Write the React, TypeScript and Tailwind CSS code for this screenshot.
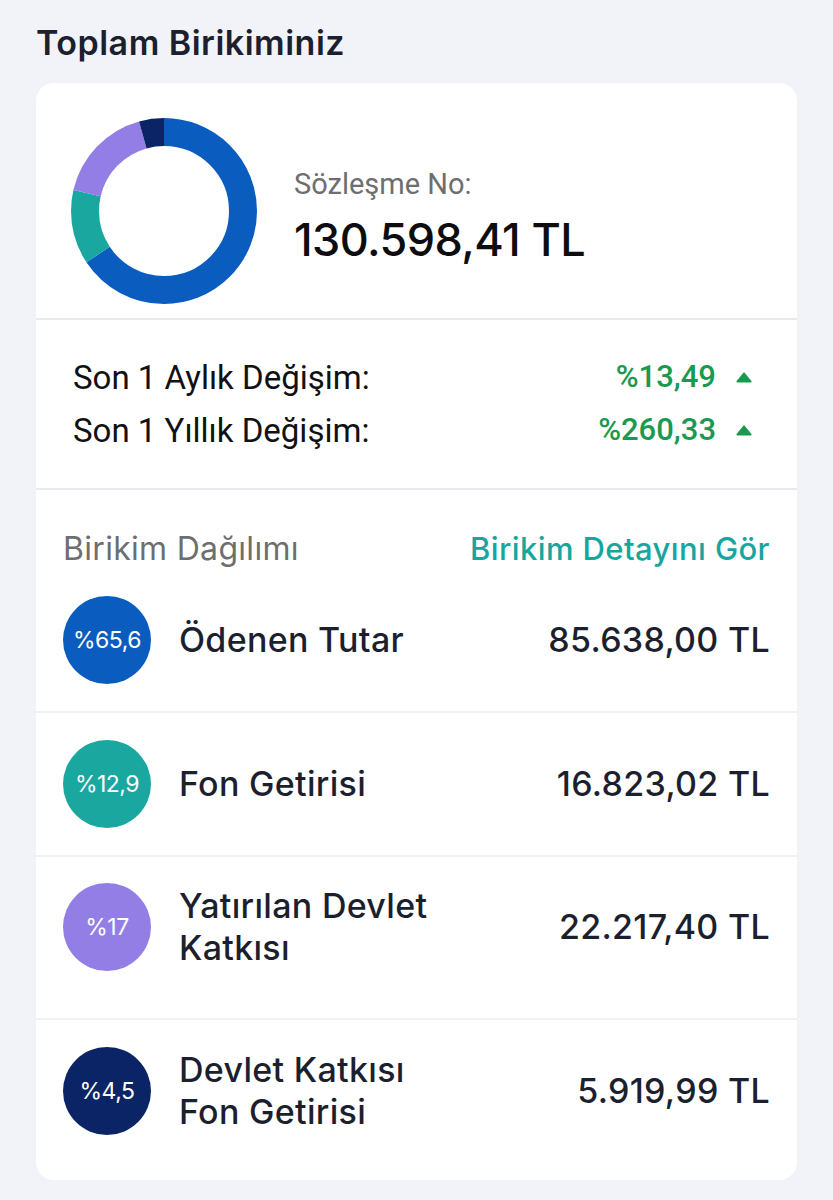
import React from "react";

type Part = { label: string[]; pct: string; value: string; color: string; share: number; pad: string };

const PARTS: Part[] = [
  { label: ["Ödenen Tutar"], pct: "%65,6", value: "85.638,00 TL", color: "#0a5dbf", share: 65.6, pad: "pt-[28px] pb-[27px]" },
  { label: ["Fon Getirisi"], pct: "%12,9", value: "16.823,02 TL", color: "#19a7a0", share: 12.9, pad: "pt-[27px] pb-[27px]" },
  { label: ["Yatırılan Devlet", "Katkısı"], pct: "%17", value: "22.217,40 TL", color: "#937ee6", share: 17, pad: "pt-[26px] pb-[47px]" },
  { label: ["Devlet Katkısı", "Fon Getirisi"], pct: "%4,5", value: "5.919,99 TL", color: "#0b2466", share: 4.5, pad: "pt-[27px] pb-[45px]" },
];

const sans = "font-['Inter','Roboto',sans-serif]";
const narrow = "font-['Roboto','Inter',sans-serif]";

function Donut() {
  const r = 79;
  const c = 2 * Math.PI * r;
  let offset = 0;
  return (
    <svg width="186" height="186" viewBox="0 0 186 186" className="shrink-0">
      <g transform="rotate(-90 93 93)">
        {PARTS.map((p) => {
          const len = (p.share / 100) * c;
          const el = (
            <circle
              key={p.pct}
              cx="93"
              cy="93"
              r={r}
              fill="none"
              stroke={p.color}
              strokeWidth="28"
              strokeDasharray={`${len} ${c - len}`}
              strokeDashoffset={-offset}
            />
          );
          offset += len;
          return el;
        })}
      </g>
    </svg>
  );
}

function UpArrow() {
  return (
    <svg width="16" height="11" viewBox="0 0 16 11" className="ml-[20px]">
      <path d="M8 1.2 L14.8 9.6 H1.2 Z" fill="#1a9a4f" stroke="#1a9a4f" strokeWidth="1.6" strokeLinejoin="round" />
    </svg>
  );
}

export default function App() {
  return (
    <div className={`min-h-[1200px] w-[833px] bg-[#f2f3f9] px-[36px] pt-[23px] ${sans}`}>
      <h1 className="text-[34px] leading-[40px] font-semibold text-[#1c1f2e] tracking-[0.5px]">Toplam Birikiminiz</h1>

      <div className="mt-[20px] bg-white rounded-[18px] overflow-hidden">
        {/* toplam + donut */}
        <div className="flex items-center pl-[35px] pt-[35px] pb-[14px]">
          <Donut />
          <div className="ml-[37px] mt-[10px]">
            <div className={`text-[29px] leading-[34px] text-[#6e6e70] ${narrow}`}>Sözleşme No:</div>
            <div className="mt-[14px] text-[45px] leading-[50px] font-medium text-[#0d0d0f] tracking-[-0.6px]">130.598,41 TL</div>
          </div>
        </div>

        {/* değişim */}
        <div className={`border-t-2 border-[#e9e9ee] pl-[37px] pr-[45px] py-[31px] ${narrow}`}>
          <div className="flex items-center justify-between h-[53px]">
            <span className="text-[33px] text-[#111114]">Son 1 Aylık Değişim:</span>
            <span className="flex items-center text-[31px] font-medium text-[#1a9a4f]">
              %13,49
              <UpArrow />
            </span>
          </div>
          <div className="flex items-center justify-between h-[53px]">
            <span className="text-[33px] text-[#111114]">Son 1 Yıllık Değişim:</span>
            <span className="flex items-center text-[31px] font-medium text-[#1a9a4f]">
              %260,33
              <UpArrow />
            </span>
          </div>
        </div>

        {/* dağılım */}
        <div className="border-t-2 border-[#e9e9ee]">
          <div className="flex items-center justify-between px-[27px] pt-[40px] h-[78px]">
            <span className="text-[32px] leading-[38px] text-[#6e6e70] tracking-[0.3px]">Birikim Dağılımı</span>
            <span className="text-[31px] leading-[38px] font-medium text-[#17a69e] tracking-[0.4px]">Birikim Detayını Gör</span>
          </div>

          {PARTS.map((p, i) => (
            <div
              key={p.pct}
              className={`flex items-center px-[27px] ${p.pad} ${i > 0 ? "border-t-2 border-[#f1f1f5]" : ""}`}
            >
              <div
                className="w-[88px] h-[88px] rounded-full flex items-center justify-center text-white text-[23px] tracking-[-0.5px] shrink-0"
                style={{ backgroundColor: p.color }}
              >
                {p.pct}
              </div>
              <div className="ml-[28px] flex-1 text-[34px] leading-[42px] font-medium text-[#1c1f2e] tracking-[0.3px]">
                {p.label.map((l) => (
                  <div key={l}>{l}</div>
                ))}
              </div>
              <div className="text-[34px] leading-[42px] font-medium text-[#1c1f2e] tracking-[0.3px]">{p.value}</div>
            </div>
          ))}
        </div>
      </div>
    </div>
  );
}
